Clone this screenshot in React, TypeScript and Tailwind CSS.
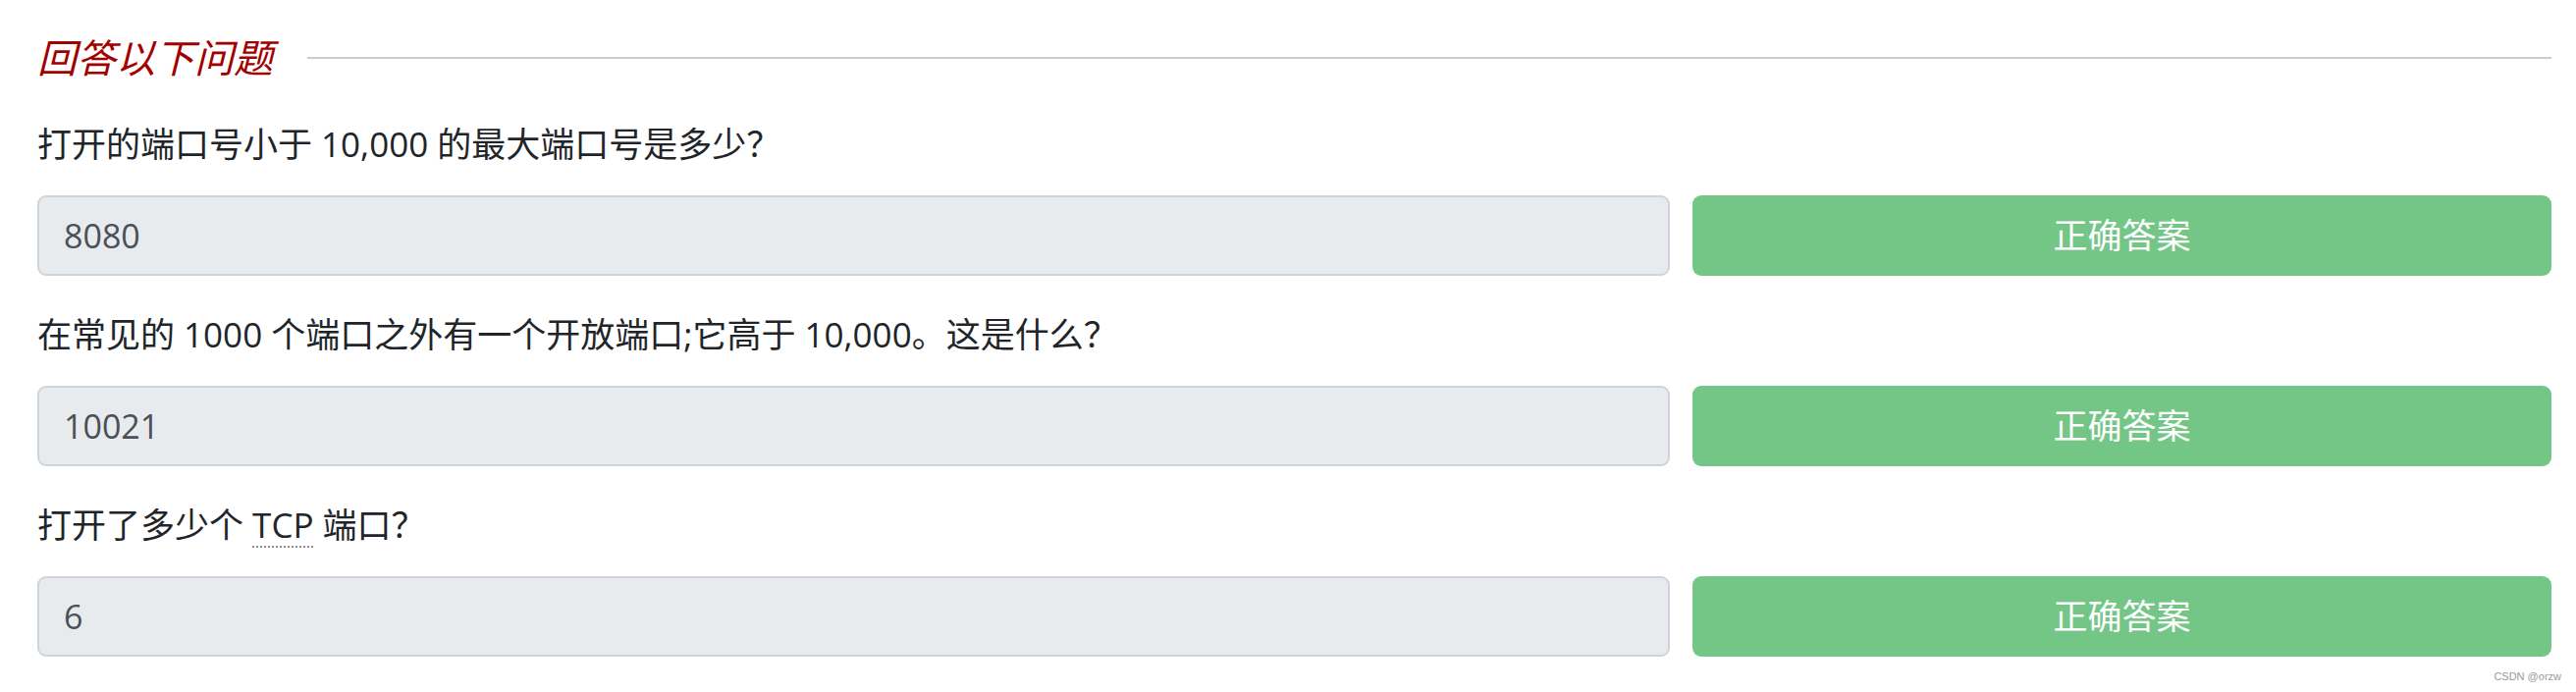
import React from "react";

type Question = {
  label: React.ReactNode;
  answer: string;
};

const questions: Question[] = [
  {
    label: <>打开的端口号小于 10,000 的最大端口号是多少？</>,
    answer: "8080",
  },
  {
    label: <>在常见的 1000 个端口之外有一个开放端口;它高于 10,000。这是什么？</>,
    answer: "10021",
  },
  {
    label: (
      <>
        打开了多少个{" "}
        <abbr
          title="Transmission Control Protocol"
          className="underline decoration-dotted decoration-[#8a8a8a] decoration-2 underline-offset-[8px]"
        >
          TCP
        </abbr>{" "}
        端口？
      </>
    ),
    answer: "6",
  },
];

function QuestionRow({ q }: { q: Question }) {
  return (
    <div className="mt-[36px] flex flex-col">
      <p className="text-[35px] leading-[48px] text-[#212529]">{q.label}</p>
      <div className="mt-[28px] flex gap-[23px]">
        <input
          readOnly
          value={q.answer}
          className="h-[82px] w-[1663px] rounded-[9px] border-2 border-[#ced4da] bg-[#e8ebee] px-[25px] text-[34px] text-[#495057] outline-none"
        />
        <button
          type="button"
          className="h-[82px] flex-1 rounded-[9px] bg-[#74c687] text-[35px] text-white"
        >
          正确答案
        </button>
      </div>
    </div>
  );
}

export default function App() {
  return (
    <div
      className="relative flex h-[705px] w-full flex-col overflow-hidden bg-white pl-[38px] pr-[25px] pt-[35px]"
      style={{ fontFamily: "'Open Sans', 'Noto Sans CJK SC', sans-serif" }}
    >
      <div className="mb-[4px] flex items-center gap-[35px]">
        <h2 className="text-[40px] leading-[48px] italic text-[#a30000]">回答以下问题</h2>
        <div className="h-[2px] flex-1 bg-[#cccccc]" />
      </div>

      {questions.map((q, i) => (
        <QuestionRow key={i} q={q} />
      ))}

      <span
        className="absolute bottom-[8px] right-[15px] text-[11px] text-[#9a9a9a]"
        style={{ fontFamily: "'Liberation Sans', sans-serif" }}
      >
        CSDN @orzw
      </span>
    </div>
  );
}
